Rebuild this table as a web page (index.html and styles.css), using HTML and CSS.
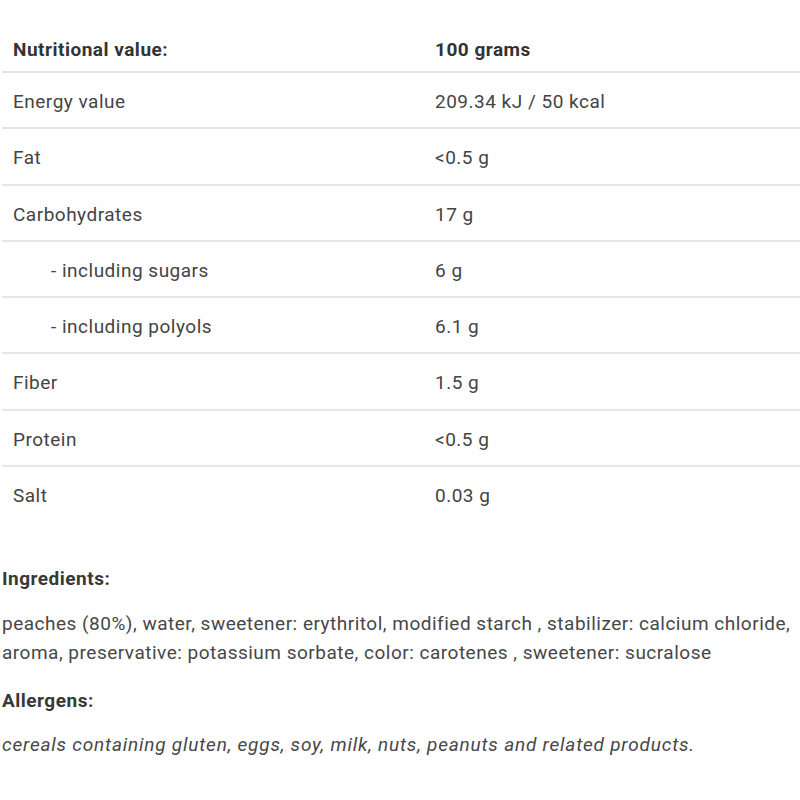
FILE: index.html
```html
<!DOCTYPE html>
<html lang="en">
<head>
<meta charset="utf-8">
<title>Nutritional value</title>
<link rel="stylesheet" href="styles.css">
</head>
<body>
<div class="page">
  <table class="nutri">
    <thead>
      <tr><th class="c1">Nutritional value:</th><th class="c2">100 grams</th></tr>
    </thead>
    <tbody>
      <tr><td>Energy value</td><td>209.34 kJ / 50 kcal</td></tr>
      <tr><td>Fat</td><td>&lt;0.5 g</td></tr>
      <tr><td>Carbohydrates</td><td>17 g</td></tr>
      <tr><td class="sub">- including sugars</td><td>6 g</td></tr>
      <tr><td class="sub">- including polyols</td><td>6.1 g</td></tr>
      <tr><td>Fiber</td><td>1.5 g</td></tr>
      <tr><td>Protein</td><td>&lt;0.5 g</td></tr>
      <tr><td>Salt</td><td>0.03 g</td></tr>
    </tbody>
  </table>
  <section class="info">
    <h3 class="info-title">Ingredients:</h3>
    <p class="info-text">peaches (80%), water, sweetener: erythritol, modified starch , stabilizer: calcium chloride, aroma, preservative: potassium sorbate, color: carotenes , sweetener: sucralose</p>
    <h3 class="info-title">Allergens:</h3>
    <p class="info-text allergens">cereals containing gluten, eggs, soy, milk, nuts, peanuts and related products.</p>
  </section>
</div>
</body>
</html>
```

FILE: styles.css
```css
html, body {
  margin: 0;
  padding: 0;
  background: #ffffff;
}
body {
  font-family: Roboto, "Liberation Sans", sans-serif;
  color: #444444;
  font-size: 19px;
  letter-spacing: 0.5px;
}
.page {
  padding: 0 0 0 2px;
  width: 798px;
}
.nutri {
  width: 100%;
  border-collapse: collapse;
  table-layout: fixed;
}
.nutri th, .nutri td {
  box-sizing: border-box;
  text-align: left;
  padding: 17px 11px 13.3px;
  line-height: 24px;
  vertical-align: top;
}
.nutri th {
  padding-top: 38px;
  padding-bottom: 9px;
  font-weight: 700;
  color: #333333;
}
.nutri .c1 {
  width: 422px;
}
.nutri tr {
  border-bottom: 2px solid #e6e6e6;
}
.nutri tbody tr:last-child {
  border-bottom: none;
}
.nutri td.sub {
  padding-left: 49px;
}
.info {
  padding-top: 46px;
}
.info-title {
  margin: 0 0 18px;
  font-size: 19px;
  line-height: 24px;
  font-weight: 700;
  color: #383838;
}
.info-text {
  margin: 0 0 22px;
  line-height: 29px;
  color: #474747;
}
.info-text.allergens {
  margin-top: -1px;
  font-style: italic;
  letter-spacing: 0.8px;
}
```
